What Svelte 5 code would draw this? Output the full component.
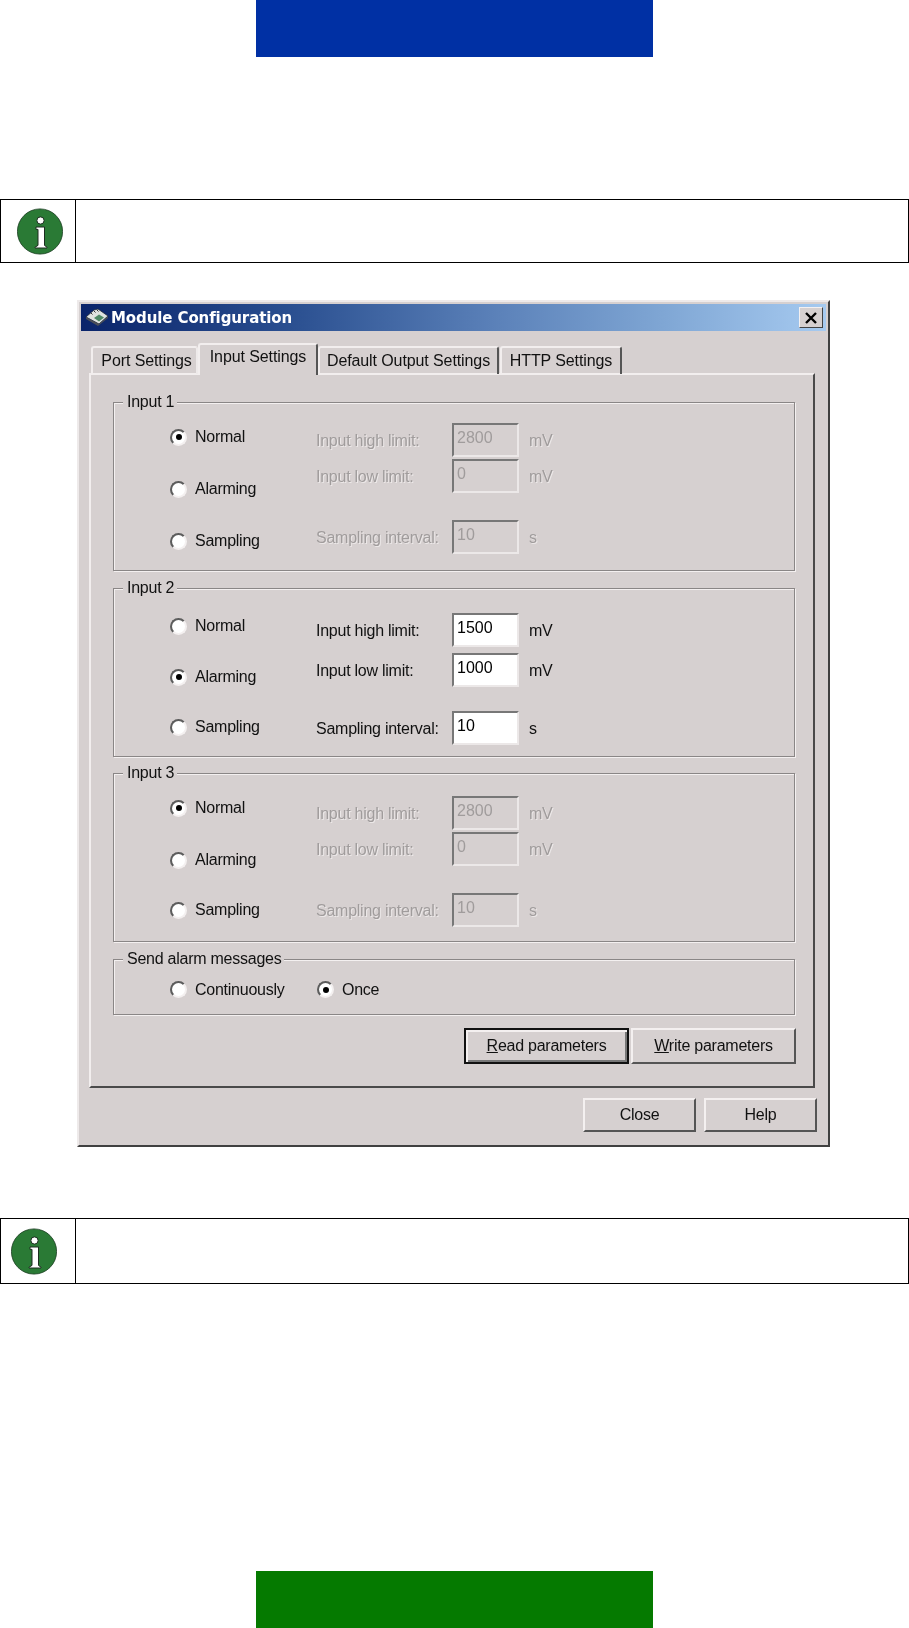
<script>
  const groups = [
    {
      name: 'Input 1',
      cls: 'g1',
      disabled: true,
      selected: 'Normal',
      high: '2800',
      low: '0',
      interval: '10'
    },
    {
      name: 'Input 2',
      cls: 'g2',
      disabled: false,
      selected: 'Alarming',
      high: '1500',
      low: '1000',
      interval: '10'
    },
    {
      name: 'Input 3',
      cls: 'g3',
      disabled: true,
      selected: 'Normal',
      high: '2800',
      low: '0',
      interval: '10'
    }
  ];
  const modes = ['Normal', 'Alarming', 'Sampling'];
  const tabs = ['Port Settings', 'Input Settings', 'Default Output Settings', 'HTTP Settings'];
</script>

{#snippet infoIcon()}
  <svg class="info" width="46" height="47" viewBox="0 0 46 47">
    <circle cx="23" cy="23.5" r="22.6" fill="#2a7a35" stroke="#1c3d22" stroke-width="0.8" />
    <circle cx="23.5" cy="12.5" r="3.6" fill="#fff" stroke="#1c2d20" stroke-width="1" />
    <path
      d="M19 19h8.5v18.4l2.5 1.8v0.8H18v-0.8l3-1.8V21.4h-2z"
      fill="#fff"
      stroke="#1c2d20"
      stroke-width="1"
    />
  </svg>
{/snippet}

{#snippet radio(label, checked, cls)}
  <div class="radio {cls}">
    <span class="dot" class:checked></span>
    <span>{label}</span>
  </div>
{/snippet}

<div class="page">
  <div class="bar blue"></div>

  <div class="note first">
    <div class="note-icon">{@render infoIcon()}</div>
    <div></div>
  </div>

  <div class="dialog">
    <div class="titlebar">
      <svg class="appicon" width="24" height="21" viewBox="0 0 24 21">
        <path d="M1 10 9 3l4-1 10 7-9 8z" fill="#dfe3e0" stroke="#20283a" stroke-width="0.8" />
        <path d="M9 11l5-3.5 5 3-5 4z" fill="#4f8a66" />
        <path d="M1 10v2l12 7 10-8V9l-9 8z" fill="#4a4f58" />
        <path d="M6 6l1.5 1.5M9 4l1.5 1.5M12 3l1.5 1.5" stroke="#333" stroke-width="1" />
      </svg>
      <span class="title">Module Configuration</span>
      <div class="closebox">
        <svg width="14" height="12" viewBox="0 0 14 12">
          <path d="M2 1l10 10M12 1 2 11" stroke="#000" stroke-width="2.4" />
        </svg>
      </div>
    </div>

    <div class="tabs">
      {#each tabs as tab, i}
        <div class="tab tab{i}" class:active={i === 1}>{tab}</div>
      {/each}
    </div>

    <div class="panel">
      {#each groups as g}
        <div class="group {g.cls}" class:off={g.disabled}>
          <span class="legend">{g.name}</span>
          <div class="radios">
            {#each modes as m}
              {@render radio(m, m === g.selected, '')}
            {/each}
          </div>
          <div class="fields">
            <div class="field f-high">
              <span class="lbl">Input high limit:</span>
              <input class="box" value={g.high} disabled={g.disabled} />
              <span class="unit">mV</span>
            </div>
            <div class="field f-low">
              <span class="lbl">Input low limit:</span>
              <input class="box" value={g.low} disabled={g.disabled} />
              <span class="unit">mV</span>
            </div>
            <div class="field f-int">
              <span class="lbl">Sampling interval:</span>
              <input class="box" value={g.interval} disabled={g.disabled} />
              <span class="unit">s</span>
            </div>
          </div>
        </div>
      {/each}

      <div class="group send">
        <span class="legend">Send alarm messages</span>
        {@render radio('Continuously', false, 'cont')}
        {@render radio('Once', true, '')}
      </div>

      <div class="actions">
        <button class="btn default"><u>R</u>ead parameters</button>
        <button class="btn"><u>W</u>rite parameters</button>
      </div>
    </div>

    <div class="footer">
      <button class="btn">Close</button>
      <button class="btn">Help</button>
    </div>
  </div>

  <div class="note second">
    <div class="note-icon">{@render infoIcon()}</div>
    <div></div>
  </div>

  <div class="bar green"></div>
</div>

<style>
  :global(body) {
    margin: 0;
    background: #fff;
  }

  .page {
    display: flex;
    flex-direction: column;
    min-height: 1628px;
    font-family: 'Liberation Sans', Arial, sans-serif;
  }

  .bar {
    width: 397px;
    height: 57px;
    margin: 0 auto;
    flex: none;
  }
  .blue {
    background: #0030a4;
  }
  .green {
    background: #057a00;
    margin-top: auto;
  }

  .note {
    display: grid;
    grid-template-columns: 75px 1fr;
    border: 1px solid #000;
    height: 64px;
    box-sizing: border-box;
  }
  .note.first {
    margin-top: 142px;
  }
  .note.second {
    margin-top: 71px;
    height: 66px;
  }
  .note-icon {
    border-right: 1px solid #000;
    display: flex;
    align-items: center;
  }
  .first .info {
    margin-left: 16px;
  }
  .second .info {
    margin-left: 10px;
  }

  .dialog {
    box-sizing: border-box;
    width: 753px;
    height: 847px;
    margin: 37px 0 0 77px;
    padding: 2px 2px 0;
    background: #d6d0d0;
    border: 2px solid;
    border-color: #eeeaea #404040 #404040 #eeeaea;
    font-size: 16px;
    letter-spacing: -0.25px;
    color: #111;
    filter: blur(0.35px);
  }

  .titlebar {
    display: flex;
    align-items: center;
    height: 27px;
    padding: 0 3px 0 4px;
    background: linear-gradient(
      90deg,
      #0a246a 0%,
      #2a4f90 28%,
      #5a80b8 55%,
      #7fa6d4 78%,
      #a6caf0 100%
    );
  }
  .appicon {
    flex: none;
    margin-right: 2px;
  }
  .title {
    color: #fff;
    font-weight: 700;
    font-family: 'DejaVu Sans', sans-serif;
    font-size: 15px;
    letter-spacing: -0.1px;
  }
  .closebox {
    margin-left: auto;
    width: 24px;
    height: 21px;
    box-sizing: border-box;
    display: flex;
    align-items: center;
    justify-content: center;
    background: #d6d0d0;
    border: 1px solid;
    border-color: #f4f0f0 #444 #444 #f4f0f0;
  }

  .tabs {
    display: flex;
    align-items: flex-end;
    height: 43px;
    margin-left: 10px;
    position: relative;
    z-index: 1;
    margin-bottom: -1px;
    letter-spacing: -0.1px;
  }
  .tab {
    box-sizing: border-box;
    height: 28px;
    padding-top: 4px;
    text-align: center;
    border: 2px solid;
    border-color: #f2eeee #555 transparent #f2eeee;
    border-bottom: 0;
    border-radius: 3px 3px 0 0;
    white-space: nowrap;
  }
  .tab0 {
    width: 107px;
    padding-left: 4px;
    border-right-color: #eeeaea;
  }
  .tab1 {
    width: 120px;
    height: 32px;
    padding-top: 3px;
    background: #d6d0d0;
    margin-bottom: -1px;
  }
  .tab2 {
    width: 181px;
    margin-left: 0;
  }
  .tab3 {
    width: 122px;
    margin-left: 1px;
  }

  .panel {
    box-sizing: border-box;
    width: 726px;
    height: 715px;
    margin-left: 8px;
    padding: 27px 20px 0 22px;
    border: 2px solid;
    border-color: #f2eeee #4a4a4a #4a4a4a #f2eeee;
  }

  .group {
    position: relative;
    box-sizing: border-box;
    width: 682px;
    display: flex;
    border: 1px solid #8a8686;
    box-shadow:
      1px 1px 0 #f4f0f0,
      inset 1px 1px 0 #f4f0f0;
  }
  .g1 {
    height: 169px;
    margin-bottom: 17px;
  }
  .g2 {
    height: 169px;
    margin-bottom: 16px;
  }
  .g3 {
    height: 169px;
    margin-bottom: 17px;
  }
  .send {
    height: 56px;
    align-items: center;
    padding: 5px 0 0 56px;
  }

  .legend {
    position: absolute;
    top: -10px;
    left: 9px;
    padding: 0 3px 0 4px;
    background: #d6d0d0;
    line-height: 18px;
  }

  .radios {
    width: 202px;
    flex: none;
    padding-left: 56px;
    box-sizing: border-box;
  }
  .radio {
    display: flex;
    align-items: center;
    gap: 8px;
    height: 18px;
  }
  .radio.cont {
    width: 147px;
    flex: none;
  }
  .g1 .radios,
  .g3 .radios {
    padding-top: 25px;
  }
  .g2 .radios {
    padding-top: 28px;
  }
  .radios .radio + .radio {
    margin-top: 34px;
  }
  .g2 .radios .radio + .radio {
    margin-top: 33px;
  }
  .g2 .radios .radio:last-child,
  .g3 .radios .radio:last-child {
    margin-top: 32px;
  }

  .dot {
    width: 17px;
    height: 17px;
    flex: none;
    box-sizing: border-box;
    border-radius: 50%;
    background: #fff;
    border: 2px solid;
    border-color: #5c5c5c #f4f0f0 #f4f0f0 #5c5c5c;
    display: flex;
    align-items: center;
    justify-content: center;
  }
  .dot.checked::after {
    content: '';
    width: 6px;
    height: 6px;
    border-radius: 50%;
    background: #000;
  }

  .fields {
    flex: none;
    width: 300px;
  }
  .field {
    display: flex;
    align-items: center;
    height: 34px;
  }
  .g1 .f-high {
    margin-top: 20px;
  }
  .g3 .f-high {
    margin-top: 22px;
  }
  .g1 .f-low,
  .g3 .f-low {
    margin-top: 2px;
  }
  .f-int {
    margin-top: 27px;
  }
  .g2 .f-high {
    margin-top: 24px;
  }
  .g2 .f-low {
    margin-top: 6px;
  }
  .g2 .f-int {
    margin-top: 24px;
  }
  .lbl {
    width: 136px;
    flex: none;
    padding-top: 2px;
  }
  .box {
    box-sizing: border-box;
    width: 67px;
    height: 34px;
    margin: 0;
    padding: 0 0 4px 3px;
    flex: none;
    font: inherit;
    font-size: 16px;
    letter-spacing: 0;
    color: #000;
    background: #fff;
    border: 2px solid;
    border-color: #777 #ece8e8 #ece8e8 #777;
    border-radius: 0;
    outline: 0;
    opacity: 1;
  }
  .unit {
    margin-left: 10px;
    padding-top: 2px;
  }

  .off .lbl,
  .off .unit {
    color: #a09c9c;
    text-shadow: 1px 1px 0 #ece8e8;
  }
  .off .box {
    background: transparent;
    color: #a09c9c;
  }

  .actions {
    display: flex;
    justify-content: flex-end;
    gap: 2px;
    margin-top: 13px;
    width: 683px;
  }

  .btn {
    box-sizing: border-box;
    height: 36px;
    width: 165px;
    padding: 0;
    font: inherit;
    letter-spacing: inherit;
    color: #111;
    background: #d6d0d0;
    border: 2px solid;
    border-color: #f4f0f0 #555 #555 #f4f0f0;
    border-radius: 0;
  }
  .btn.default {
    outline: 2px solid #111;
    outline-offset: -2px;
    border-color: #111 #333 #333 #111;
    box-shadow:
      inset 2px 2px 0 #f4f0f0,
      inset -2px -2px 0 #777;
  }

  .footer {
    display: flex;
    justify-content: flex-end;
    gap: 8px;
    width: 736px;
    margin-top: 10px;
  }
  .footer .btn {
    width: 113px;
    height: 34px;
  }
</style>
